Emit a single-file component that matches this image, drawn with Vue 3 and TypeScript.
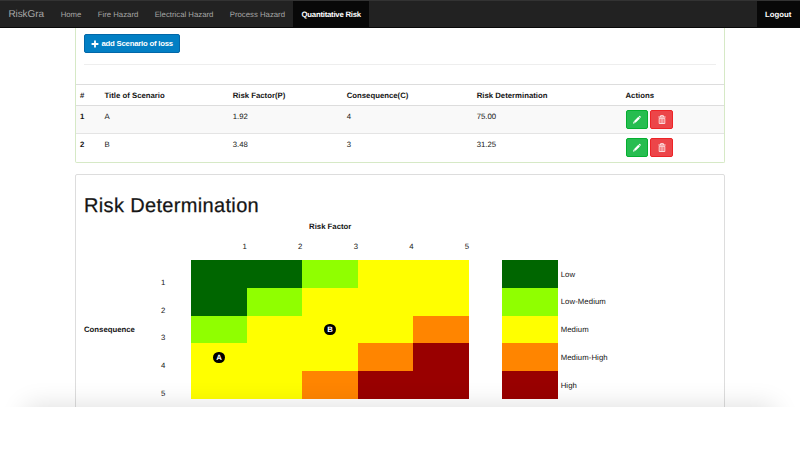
<script setup lang="ts">
interface Scenario {
  id: number
  title: string
  factor: string
  consequence: number
  result: string
}
type Level = 'low' | 'low-medium' | 'medium' | 'medium-high' | 'high'

const links: string[] = ['Home', 'Fire Hazard', 'Electrical Hazard', 'Process Hazard', 'Quantitative Risk']
const active = 'Quantitative Risk'
const headers: string[] = ['#', 'Title of Scenario', 'Risk Factor(P)', 'Consequence(C)', 'Risk Determination', 'Actions']
const scenarios: Scenario[] = [
  { id: 1, title: 'A', factor: '1.92', consequence: 4, result: '75.00' },
  { id: 2, title: 'B', factor: '3.48', consequence: 3, result: '31.25' },
]
const matrix: Level[][] = [
  ['low', 'low', 'low-medium', 'medium', 'medium'],
  ['low', 'low-medium', 'medium', 'medium', 'medium'],
  ['low-medium', 'medium', 'medium', 'medium', 'medium-high'],
  ['medium', 'medium', 'medium', 'medium-high', 'high'],
  ['medium', 'medium', 'medium-high', 'high', 'high'],
]
const markers: Record<string, string> = { '3-0': 'A', '2-2': 'B' }
const legend: { level: Level; label: string }[] = [
  { level: 'low', label: 'Low' },
  { level: 'low-medium', label: 'Low-Medium' },
  { level: 'medium', label: 'Medium' },
  { level: 'medium-high', label: 'Medium-High' },
  { level: 'high', label: 'High' },
]
</script>

<template>
  <div class="page">
    <nav class="navbar">
      <a class="brand">RiskGra</a>
      <a v-for="l in links" :key="l" class="link" :class="{ active: l === active, tight: l === active }">{{ l }}</a>
      <a class="link active logout">Logout</a>
    </nav>

    <main class="container">
      <section class="panel scenarios">
        <div class="panel-body">
          <button class="btn add">
            <svg class="plus" viewBox="0 0 8 8"><path d="M3.1.6h1.8v2.5h2.5v1.8H4.9v2.5H3.1V4.9H.6V3.1h2.5z" fill="#fff" /></svg>
            <span>add Scenario of loss</span>
          </button>
          <hr />
        </div>
        <div class="row head">
          <div v-for="h in headers" :key="h" class="cell">{{ h }}</div>
        </div>
        <div v-for="s in scenarios" :key="s.id" class="row item">
          <div class="cell strong">{{ s.id }}</div>
          <div class="cell">{{ s.title }}</div>
          <div class="cell">{{ s.factor }}</div>
          <div class="cell">{{ s.consequence }}</div>
          <div class="cell">{{ s.result }}</div>
          <div class="cell actions">
            <button class="btn edit">
              <svg viewBox="0 0 10 10"><path d="M1 8.7 1.6 6.6 3.1 8.1zM1.9 6.2 6.3 1.8 7.9 3.4 3.5 7.8zM6.7 1.5 7.3.9Q7.7.6 8.1 1L8.6 1.5Q9 1.9 8.7 2.3L8.1 3z" fill="#fff" /></svg>
            </button>
            <button class="btn remove">
              <svg viewBox="0 0 10 10" fill="none" stroke="#fff"><path d="M1.4 2h7.2M3.6 1.8V.7h2.8v1.1" stroke-width=".9" /><path d="M2.2 3.3h5.6v5.2H2.2zM4.1 3.6v4.6M5.9 3.6v4.6" stroke-width=".8" /></svg>
            </button>
          </div>
        </div>
      </section>

      <section class="panel risk">
        <h1>Risk Determination</h1>
        <div class="chart">
          <div class="y-title">Consequence</div>
          <div class="y-axis"><span v-for="n in 5" :key="n">{{ n }}</span></div>
          <div class="plot">
            <div class="x-title">Risk Factor</div>
            <div class="x-axis"><span v-for="n in 5" :key="n">{{ n }}</span></div>
            <div class="matrix">
              <template v-for="(r, i) in matrix" :key="i">
                <div v-for="(c, j) in r" :key="j" class="tile" :class="c">
                  <span v-if="markers[`${i}-${j}`]" class="marker">{{ markers[`${i}-${j}`] }}</span>
                </div>
              </template>
            </div>
          </div>
          <div class="legend">
            <div v-for="e in legend" :key="e.level" class="entry">
              <div class="swatch" :class="e.level"></div>
              <span>{{ e.label }}</span>
            </div>
          </div>
        </div>
      </section>
    </main>
    <footer class="footer"></footer>
  </div>
</template>

<style>
body { margin: 0; background: #fff; }
</style>

<style scoped>
* { box-sizing: border-box; }
.page {
  width: 800px; height: 450px; overflow: hidden; display: flex; flex-direction: column;
  font: 7.78px/11px "Liberation Sans", Arial, sans-serif; color: #151515; background: #fff;
  text-rendering: geometricPrecision;
}
.navbar {
  height: 28px; flex: none; display: flex; background: #222; border-top: 1px solid #333;
  border-bottom: 1px solid #090909; line-height: 26px; color: #a6a6a6;
}
.brand { font-size: 10px; line-height: 28px; letter-spacing: -.08px; padding: 0 8.5px 0 8.4px; }
.link { padding: 0 8.2px; line-height: 27px; }
.link.active { background: #080808; color: #fff; font-weight: bold; }
.link.tight { letter-spacing: -.24px; padding: 0 8.3px; }
.link.logout { margin-left: auto; padding-right: 8.6px; }
.container { width: 650px; height: 379px; flex: none; margin: 0 auto; }
.panel { border: 1px solid #ddd; border-radius: 2px; background: #fff; }
.scenarios { height: 135px; border-color: #d6e9c6; border-top: 0; border-radius: 0 0 2px 2px; }
.panel-body { height: 56px; padding: 6px 8px 0; }
.btn { font: inherit; border: 1px solid; border-radius: 2px; padding: 0; display: flex; align-items: center; justify-content: center; color: #fff; }
.add { width: 96px; height: 19px; gap: 2.4px; background: #027fc4; border-color: #0267a8; font-weight: bold; letter-spacing: -.22px; }
.plus { width: 8px; height: 8px; }
hr { margin: 11px 0 0; border: 0; border-top: 1px solid #eee; }
.row { display: grid; grid-template-columns: 24.4px 128.2px 114px 130px 148.8px 1fr; border-top: 1px solid #ddd; }
.cell { padding: 5px 4.1px 0; white-space: nowrap; }
.head { height: 21px; font-weight: bold; }
.item { height: 28px; }
.head + .item { background: #f9f9f9; }
.item + .item { border-top-color: #e4e4e4; }
.strong { font-weight: bold; }
.actions { display: flex; gap: 2px; padding: 4px 4.5px 0; }
.actions .btn { width: 22.5px; height: 19px; }
.actions svg { width: 10px; height: 10px; }
.edit { background: #26bd50; border-color: #05af30; }
.remove { background: #ec4549; border-color: #ed2427; }
.risk { margin-top: 11px; height: 260px; padding: 0 8px; }
h1 { margin: 20px 0 0; font-size: 20px; line-height: 22px; font-weight: 500; letter-spacing: .34px; -webkit-text-stroke: .25px #151515; }
.chart { display: flex; }
.y-title { width: 77px; padding-top: 107px; font-weight: bold; }
.y-axis { width: 30.3px; padding-top: 51.8px; display: flex; flex-direction: column; }
.y-axis span { height: 27.78px; line-height: 28px; }
.plot { width: 277.8px; }
.x-title { height: 21px; line-height: 20px; text-align: center; font-weight: bold; }
.x-axis { height: 22.2px; display: grid; grid-template-columns: repeat(5, 1fr); text-align: right; line-height: 17px; }
.matrix { display: grid; grid-template: repeat(5, 27.78px) / repeat(5, 55.56px); }
.tile { display: flex; align-items: center; justify-content: center; }
.low { background: #060; }
.low-medium { background: #90ff00; }
.medium { background: #ff0; }
.medium-high { background: #ff8500; }
.high { background: #900; }
.marker { width: 11.5px; height: 11.5px; border-radius: 50%; background: #000; color: #fff; font-weight: bold; line-height: 11.5px; text-align: center; }
.legend { margin-left: 33px; padding-top: 43.2px; }
.entry { display: flex; align-items: center; gap: 3px; height: 27.78px; letter-spacing: .08px; }
.swatch { width: 55.56px; height: 27.78px; }
.footer { position: relative; height: 43px; flex: none; background: #fff; }
.footer::before { content: ""; position: absolute; z-index: 1; inset: 0 26px -40px; box-shadow: 0 0 25px rgba(0, 0, 0, .14); }
.footer::after { content: ""; position: absolute; z-index: 2; inset: 0; background: #fff; }
</style>
